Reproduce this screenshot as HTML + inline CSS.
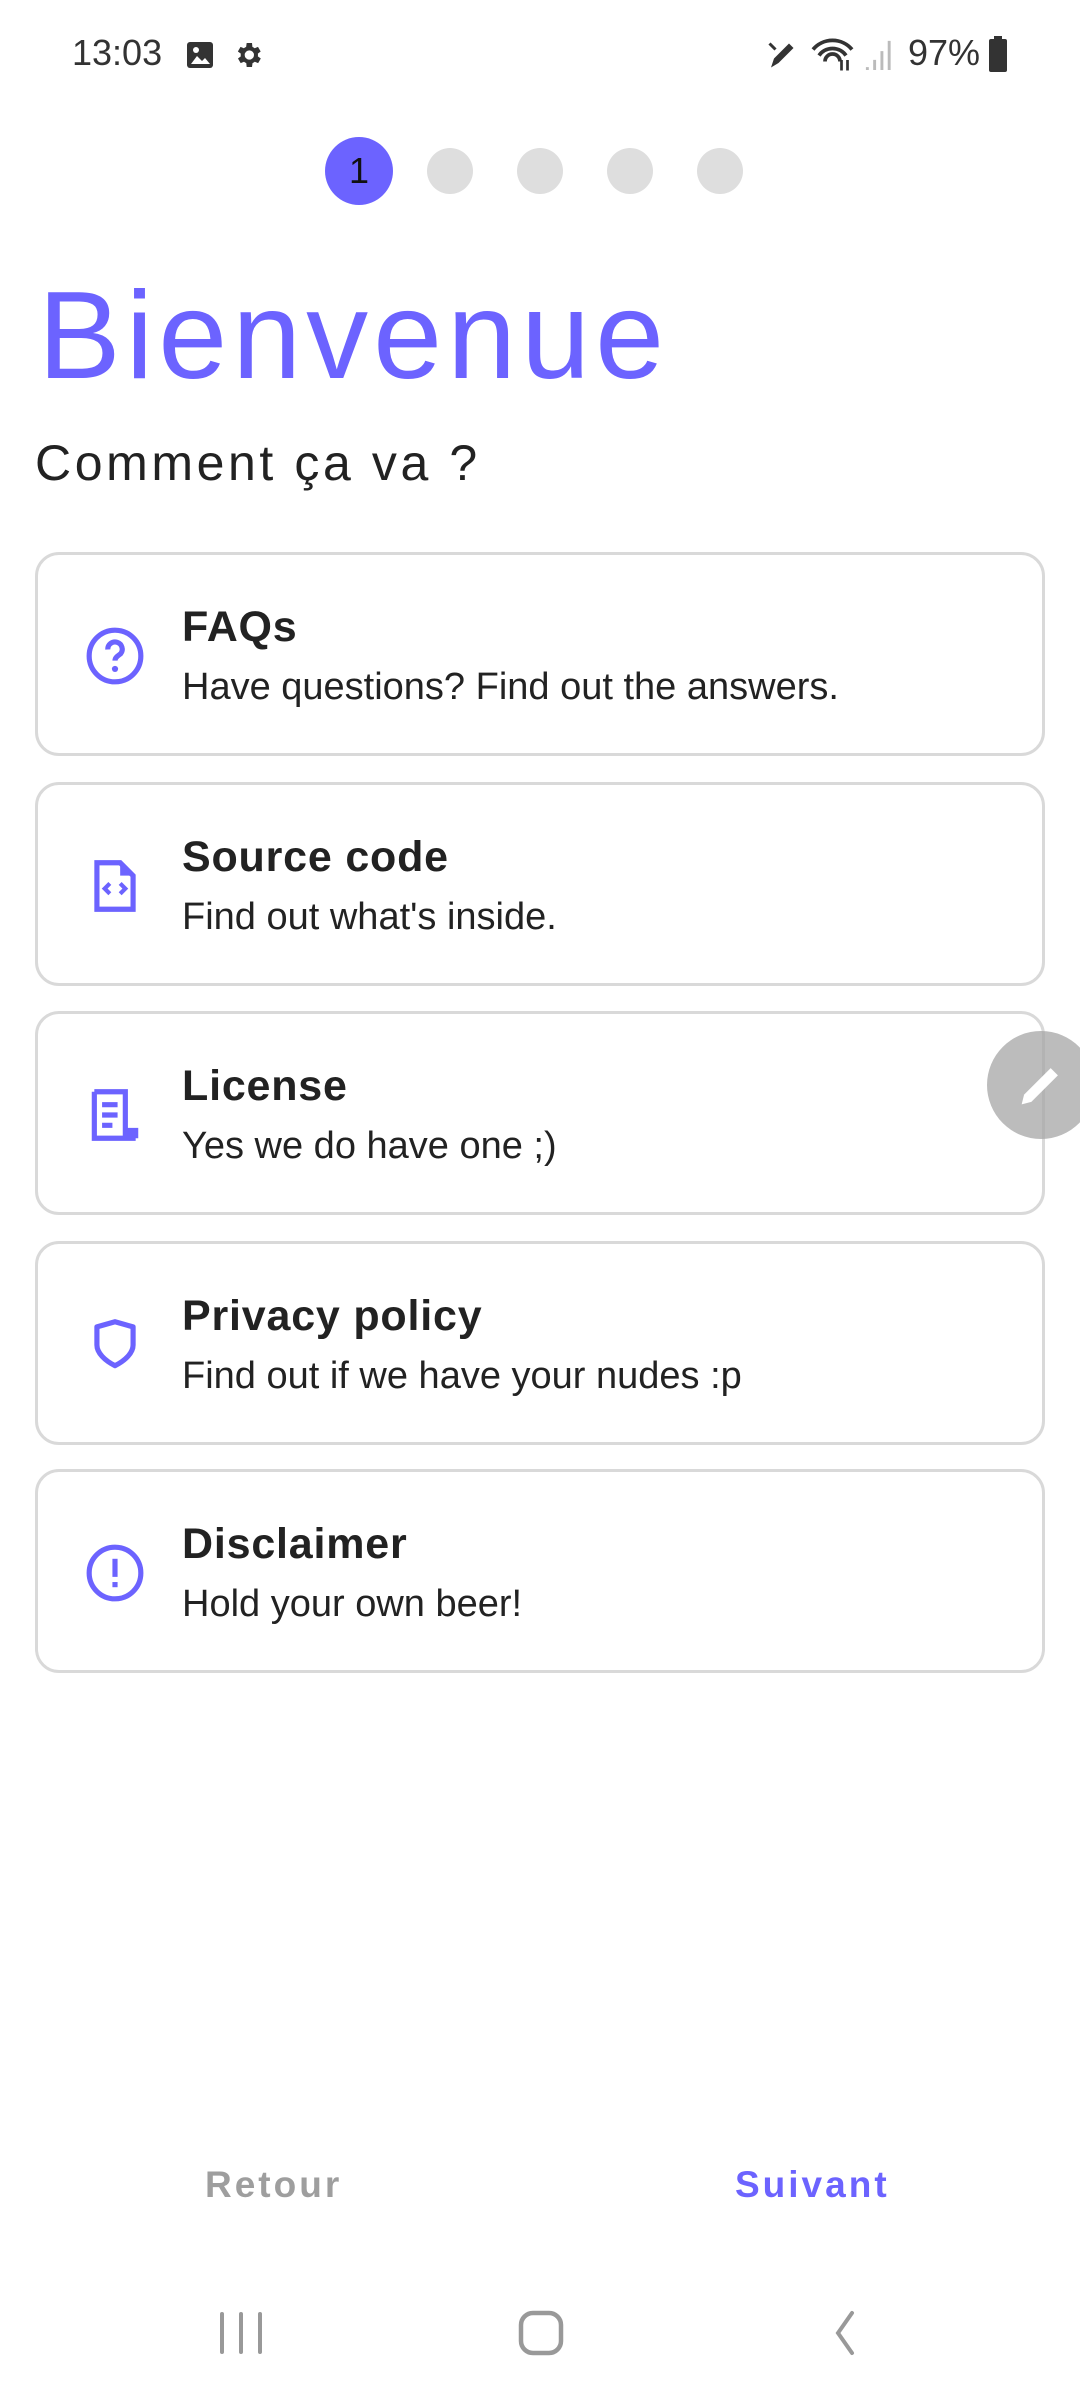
<!DOCTYPE html>
<html><head><meta charset="utf-8"><style>
*{margin:0;padding:0;box-sizing:border-box}
body{width:1080px;height:2400px;background:#fff;position:relative;overflow:hidden;font-family:"Liberation Sans",sans-serif;color:#222}
.abs{position:absolute}
.dot{position:absolute;top:148px;width:46px;height:46px;border-radius:50%;background:#dedede}
.card{position:absolute;left:35px;width:1010px;height:204px;border:3px solid #d9d9d9;border-radius:24px}
.card svg{position:absolute;left:46px;top:70px}
.t{position:absolute;left:144px;top:48px;font-weight:bold;font-size:43px;color:#222;letter-spacing:0.8px}
.s{position:absolute;left:144px;top:111px;font-size:38px;color:#222}
</style></head><body>
<div class="abs" style="left:72px;top:32px;font-size:36px;color:#333">13:03</div>
<svg class="abs" style="left:185px;top:40px" width="30" height="30" viewBox="0 0 30 30"><rect x="2" y="2" width="26" height="26" rx="3" fill="#333"/><path d="M6 24 L12 16 L17 21 L20 18 L25 24Z" fill="#fff"/><circle cx="11" cy="10" r="3" fill="#fff"/></svg>
<svg class="abs" style="left:232px;top:39px" width="32" height="32" viewBox="0 0 24 24"><path fill="#333" d="M19.4 13a7.5 7.5 0 000-2l2.1-1.6-2-3.5-2.5 1a7 7 0 00-1.7-1L15 3h-4l-.4 2.9a7 7 0 00-1.7 1l-2.5-1-2 3.5L6.6 11a7.5 7.5 0 000 2l-2.1 1.6 2 3.5 2.5-1a7 7 0 001.7 1L11 21h4l.4-2.9a7 7 0 001.7-1l2.5 1 2-3.5zM13 15.5a3.5 3.5 0 110-7 3.5 3.5 0 010 7z"/></svg>
<svg class="abs" style="left:765px;top:36px" width="36" height="36" viewBox="0 0 24 24"><path d="M4 21l2-6 10-10 3 3-10 10z" fill="#333"/><path d="M3 5l4 4" stroke="#333" stroke-width="2"/></svg>
<svg class="abs" style="left:810px;top:36px" width="48" height="36" viewBox="0 0 32 24"><path d="M2 9a17 17 0 0126 0M6 13a11 11 0 0118 0M10 17a5 5 0 0110 0" stroke="#333" stroke-width="2.5" fill="none"/><path d="M21 16v7M25 23v-7" stroke="#333" stroke-width="1.8"/></svg>
<svg class="abs" style="left:864px;top:38px" width="30" height="32" viewBox="0 0 20 22"><path d="M2 20v2M7 15v7M12 9v13M17 2v20" stroke="#bbb" stroke-width="2"/></svg>
<div class="abs" style="left:908px;top:32px;font-size:36px;color:#333">97%</div>
<svg class="abs" style="left:988px;top:36px" width="20" height="36" viewBox="0 0 20 36"><rect x="6" y="0" width="8" height="4" fill="#333"/><rect x="1" y="3" width="18" height="33" rx="2" fill="#333"/></svg>

<div class="abs" style="left:325px;top:137px;width:68px;height:68px;border-radius:50%;background:#6c63ff;color:#111;font-size:36px;text-align:center;line-height:68px">1</div>
<div class="dot" style="left:427px"></div>
<div class="dot" style="left:517px"></div>
<div class="dot" style="left:607px"></div>
<div class="dot" style="left:697px"></div>

<div class="abs" style="left:38px;top:266px;font-size:124px;color:#6c63ff;letter-spacing:5px;line-height:140px">Bienvenue</div>
<div class="abs" style="left:35px;top:434px;font-size:50px;color:#222;letter-spacing:3.6px">Comment ça va ?</div>

<div class="card" style="top:552px">
<svg width="62" height="62" viewBox="0 0 24 24"><circle cx="12" cy="12" r="10" fill="none" stroke="#6c63ff" stroke-width="2"/><path d="M9.2 9.5a2.8 2.8 0 115 1.6c-.9.8-2.2 1.3-2.2 2.7" fill="none" stroke="#6c63ff" stroke-width="2"/><circle cx="12" cy="17" r="1.2" fill="#6c63ff"/></svg>
<div class="t">FAQs</div><div class="s">Have questions? Find out the answers.</div></div>
<div class="card" style="top:782px">
<svg width="62" height="62" viewBox="0 0 24 24"><path d="M5 3h9l5 5v13H5z" fill="none" stroke="#6c63ff" stroke-width="2"/><path d="M14 3v5h5" fill="#6c63ff"/><path d="M10 11l-2 2 2 2M14 11l2 2-2 2" fill="none" stroke="#6c63ff" stroke-width="1.6"/></svg>
<div class="t">Source code</div><div class="s">Find out what's inside.</div></div>
<div class="card" style="top:1011px">
<svg width="62" height="62" viewBox="0 0 24 24"><path d="M4 3h12v17h4v-2h-4M4 3v18h16" fill="none" stroke="#6c63ff" stroke-width="2"/><path d="M7 8h6M7 12h6M7 16h4" stroke="#6c63ff" stroke-width="2"/></svg>
<div class="t">License</div><div class="s">Yes we do have one ;)</div></div>
<div class="card" style="top:1241px">
<svg width="62" height="62" viewBox="0 0 24 24"><path d="M12 3l7 2v7c0 3-3 6-7 8-4-2-7-5-7-8V5z" fill="none" stroke="#6c63ff" stroke-width="2" stroke-linejoin="round"/></svg>
<div class="t">Privacy policy</div><div class="s">Find out if we have your nudes :p</div></div>
<div class="card" style="top:1469px">
<svg width="62" height="62" viewBox="0 0 24 24"><circle cx="12" cy="12" r="10" fill="none" stroke="#6c63ff" stroke-width="2"/><path d="M12 6.5v7" stroke="#6c63ff" stroke-width="2"/><rect x="11" y="15.5" width="2" height="2" fill="#6c63ff"/></svg>
<div class="t">Disclaimer</div><div class="s">Hold your own beer!</div></div>

<div class="abs" style="left:987px;top:1031px;width:108px;height:108px;border-radius:50%;background:rgba(165,165,165,0.75)"></div>
<svg class="abs" style="left:1012px;top:1056px" width="58" height="58" viewBox="0 0 24 24"><path d="M4 20l1-4L16 5l3 3L8 19z" fill="#fff"/></svg>

<div class="abs" style="left:205px;top:2164px;font-size:37px;font-weight:bold;color:#9e9e9e;letter-spacing:3px">Retour</div>
<div class="abs" style="left:735px;top:2164px;font-size:37px;font-weight:bold;color:#6c63ff;letter-spacing:3px">Suivant</div>

<svg class="abs" style="left:218px;top:2310px" width="46" height="46" viewBox="0 0 46 46"><path d="M4 4v38M23 4v38M42 4v38" stroke="#999" stroke-width="4" stroke-linecap="round"/></svg>
<svg class="abs" style="left:518px;top:2310px" width="46" height="46" viewBox="0 0 46 46"><rect x="3" y="3" width="40" height="40" rx="12" fill="none" stroke="#999" stroke-width="4.5"/></svg>
<svg class="abs" style="left:830px;top:2310px" width="30" height="46" viewBox="0 0 30 46"><path d="M22 3L8 23l14 20" fill="none" stroke="#999" stroke-width="4" stroke-linecap="round"/></svg>
</body></html>
